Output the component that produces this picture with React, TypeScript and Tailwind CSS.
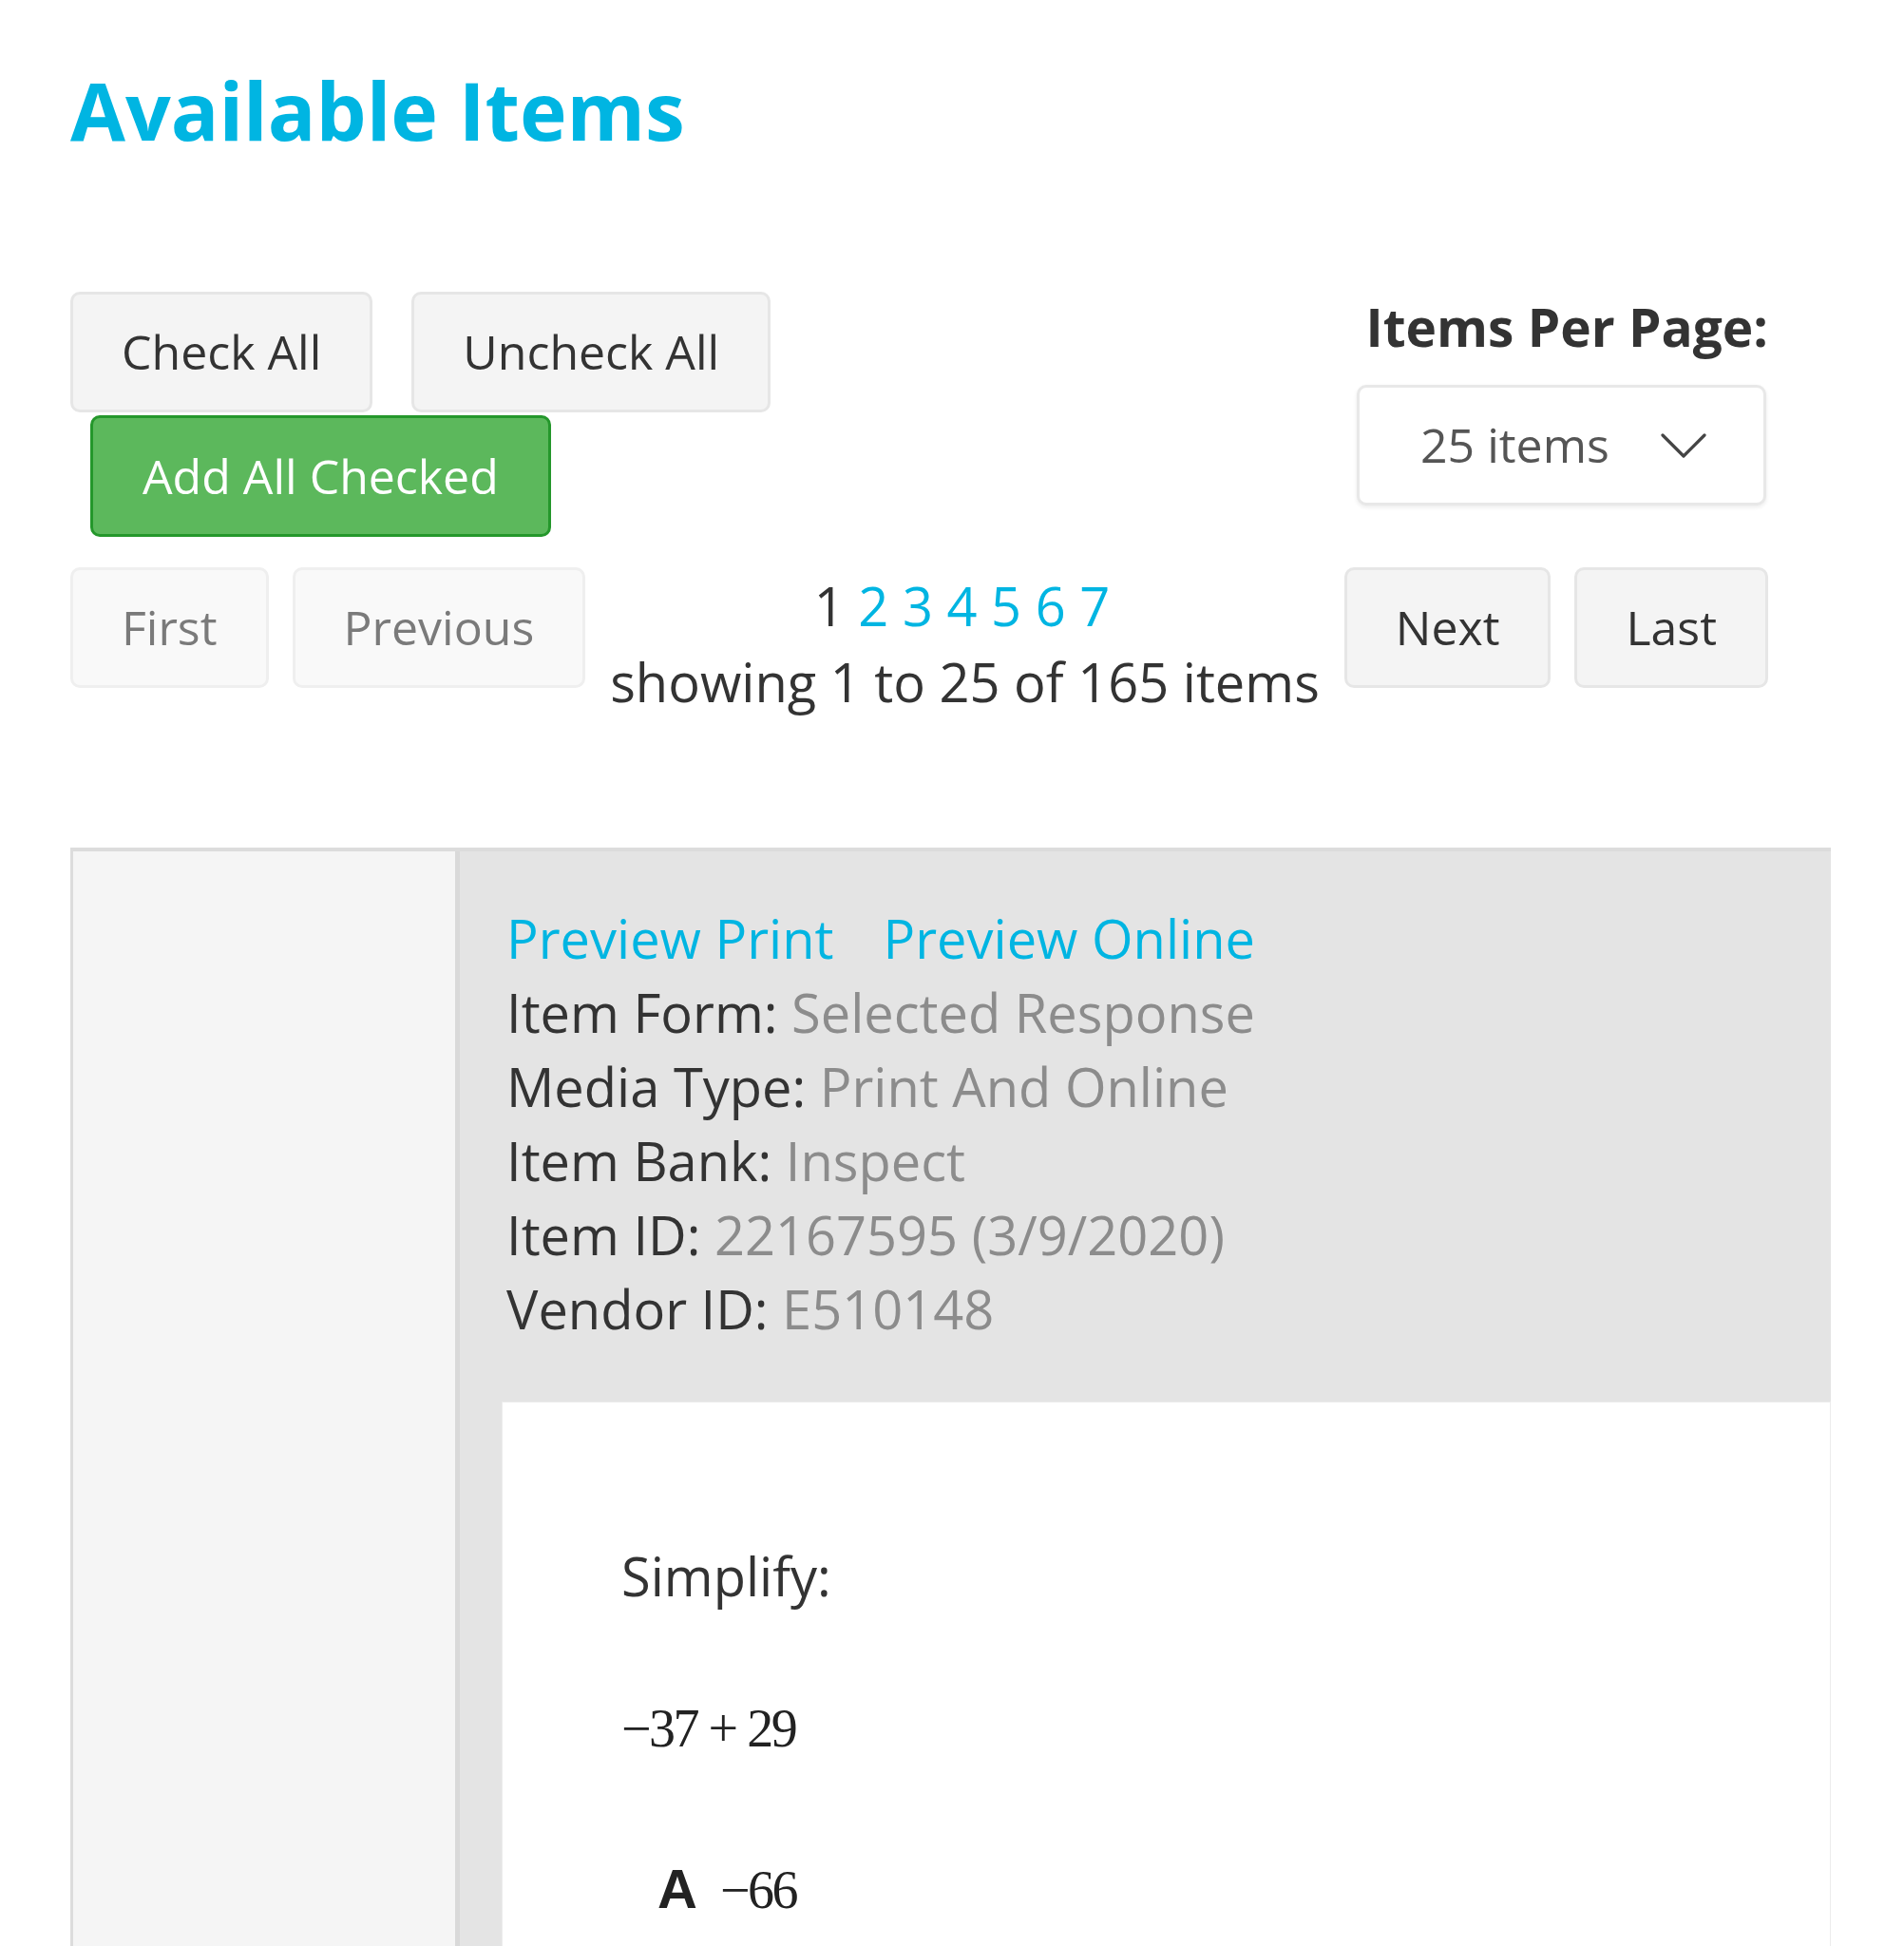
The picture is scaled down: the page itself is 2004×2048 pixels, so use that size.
const btn =
  "flex h-[127px] items-center rounded-[10px] border-[3px] px-[51px] text-[50px]";
const btnOn = `${btn} border-[#e6e6e6] bg-[#f4f4f4] text-[#333]`;
const btnOff = `${btn} border-[#efefef] bg-[#f9f9f9] text-[#7a7a7a]`;

const details = [
  ["Item Form:", "Selected Response"],
  ["Media Type:", "Print And Online"],
  ["Item Bank:", "Inspect"],
  ["Item ID:", "22167595 (3/9/2020)"],
  ["Vendor ID:", "E510148"],
];

const App = () => {
  return (
    <div className="min-h-screen bg-white pl-[74px] pr-[77px] font-['Open_Sans',sans-serif] text-[#333]">
      <h1 className="pt-[74px] text-[84px] font-bold leading-none text-[#00b5e2]">
        Available Items
      </h1>

      <div className="pr-[66px]">
        {/* toolbar */}
        <div className="mt-[149px] flex items-start justify-between">
          <div className="flex flex-col">
            <div className="flex gap-[41px]">
              <button className={btnOn}>Check All</button>
              <button className={btnOn}>Uncheck All</button>
            </div>
            <div className="ml-[21px] mt-[3px]">
              <button className="flex h-[128px] items-center rounded-[10px] border-[3px] border-[#24972b] bg-[#5cb85c] px-[52px] text-[50px] text-white">
                Add All Checked
              </button>
            </div>
          </div>
          <div className="-mt-[3px] flex flex-col items-end">
            <div className="text-[55px] font-bold leading-[80px]">
              Items Per Page:
            </div>
            <div className="mr-[2px] mt-[21px] flex h-[127px] w-[431px] items-center justify-between rounded-[10px] border-[3px] border-[#e8e8e8] bg-white pl-[64px] pr-[60px] text-[50px] text-[#555] shadow-[0_2px_4px_rgba(0,0,0,0.08)]">
              <span>25 items</span>
              <svg width="48" height="28" viewBox="0 0 48 28" fill="none">
                <polyline
                  points="2,3 24,25 46,3"
                  stroke="#444"
                  strokeWidth="3.2"
                  strokeLinecap="round"
                  strokeLinejoin="round"
                />
              </svg>
            </div>
          </div>
        </div>

        {/* pagination */}
        <div className="mt-[32px] flex items-start gap-[25px]">
          <button className={btnOff}>First</button>
          <button className={btnOff}>Previous</button>
          <div className="flex-1 text-center text-[56px] leading-[80px]">
            <div className="pr-[6px]">
              <span>1</span>{" "}
              <span className="text-[#00b5e2]">2 3 4 5 6 7</span>
            </div>
            <div>showing 1 to 25 of 165 items</div>
          </div>
          <button className={btnOn}>Next</button>
          <button className={btnOn}>Last</button>
        </div>
      </div>

      {/* item panel */}
      <div className="mt-[135px] flex border-l-[3px] border-t-4 border-[#dcdcdc]">
        <div className="w-[407px] shrink-0 border-r-[5px] border-[#d9d9d9] bg-[#f5f5f5]" />
        <div className="flex-1 bg-[#e4e4e4] pl-[44px] pt-[52px]">
          <div className="pl-[5px] text-[56px] leading-[78px]">
            <div className="flex gap-[52px] text-[#00b5e2]">
              <span>Preview Print</span>
              <span>Preview Online</span>
            </div>
            {details.map(([k, v]) => (
              <div key={k}>
                {k} <span className="text-[#8c8c8c]">{v}</span>
              </div>
            ))}
          </div>
          <div className="mt-[59px] border border-[#ececec] bg-white pb-[300px] pl-[125px] pt-[143px]">
            <div className="text-[56px] leading-[78px]">Simplify:</div>
            <div className="mt-[83px] font-['Liberation_Serif',serif] text-[56px] leading-[78px] tracking-[-2.5px] text-[#222]">
              −37 + 29
            </div>
            <div className="ml-[38px] mt-[91px] flex items-baseline gap-[24px] leading-[78px] text-[#222]">
              <span className="font-['Liberation_Sans',sans-serif] text-[58px] font-bold">A</span>
              <span className="font-['Liberation_Serif',serif] text-[56px] tracking-[-2.5px]">−66</span>
            </div>
          </div>
        </div>
      </div>
    </div>
  );
};

export default App;
